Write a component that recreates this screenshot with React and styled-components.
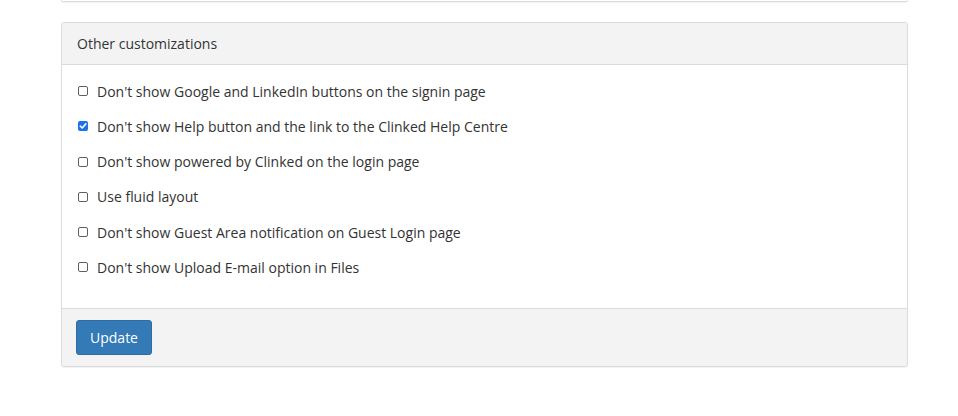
import React from "react";
import styled, { createGlobalStyle } from "styled-components";

const Global = createGlobalStyle`
  html, body { margin: 0; padding: 0; background: #fff; }
  body { font-family: "Open Sans", "Liberation Sans", sans-serif; color: #333; font-size: 14px; }
  * { box-sizing: border-box; }
`;

const Page = styled.div`
  width: 958px;
  height: 416px;
  padding: 0 50px 0 61px;
  display: flex;
  flex-direction: column;
  gap: 20px;
  overflow: hidden;
`;

const StubPanel = styled.div`
  width: 847px;
  height: 2px;
  border: 1px solid #dcdcdc;
  border-top: none;
  border-radius: 0 0 3px 3px;
  box-shadow: 0 1px 1px rgba(0, 0, 0, 0.05);
`;

const Panel = styled.div`
  width: 847px;
  border: 1px solid #dcdcdc;
  border-radius: 3px;
  background: #fff;
  box-shadow: 0 1px 1px rgba(0, 0, 0, 0.06);
  display: flex;
  flex-direction: column;
`;

const PanelHeading = styled.div`
  background: #f3f3f3;
  border-bottom: 1px solid #dcdcdc;
  border-radius: 3px 3px 0 0;
  height: 42px;
  padding: 0 15px;
  display: flex;
  align-items: center;
  font-size: 14px;
  color: #333;
`;

const PanelBody = styled.div`
  padding: 16px 15px 0 15px;
  height: 243px;
  display: flex;
  flex-direction: column;
  gap: 15.3px;
`;

const CheckRow = styled.label`
  display: flex;
  align-items: center;
  height: 20px;
  gap: 9px;
  font-size: 14px;
  color: #333;
  cursor: pointer;
`;

const Box = styled.span`
  width: 10px;
  height: 10px;
  margin-left: 1px;
  border-radius: 2px;
  flex: none;
  display: flex;
  align-items: center;
  justify-content: center;
  border: ${(p) => (p.$checked ? "none" : "1.6px solid #5f5f5f")};
  background: ${(p) => (p.$checked ? "#1a73e8" : "#fff")};
`;

const PanelFooter = styled.div`
  background: #f3f3f3;
  border-top: 1px solid #dcdcdc;
  border-radius: 0 0 3px 3px;
  padding: 11px 14px 11px 14px;
  display: flex;
`;

const Button = styled.button`
  font-family: "Open Sans", "Liberation Sans", sans-serif;
  font-size: 14px;
  color: #fff;
  background: #337ab7;
  border: 1px solid #2e6da4;
  border-radius: 3px;
  height: 35px;
  width: 76px;
  padding: 0;
  cursor: pointer;
`;

const options = [
  { label: "Don't show Google and LinkedIn buttons on the signin page", checked: false },
  { label: "Don't show Help button and the link to the Clinked Help Centre", checked: true },
  { label: "Don't show powered by Clinked on the login page", checked: false },
  { label: "Use fluid layout", checked: false },
  { label: "Don't show Guest Area notification on Guest Login page", checked: false },
  { label: "Don't show Upload E-mail option in Files", checked: false },
];

function Check({ checked }) {
  return (
    <Box $checked={checked}>
      {checked && (
        <svg width="8" height="8" viewBox="0 0 8 8">
          <path d="M1.3 4.2 L3.2 6 L6.8 1.9" fill="none" stroke="#fff" strokeWidth="1.6" strokeLinecap="round" strokeLinejoin="round" />
        </svg>
      )}
    </Box>
  );
}

export default function App() {
  return (
    <>
      <Global />
      <Page>
        <StubPanel />
        <Panel>
          <PanelHeading>Other customizations</PanelHeading>
          <PanelBody>
            {options.map((o) => (
              <CheckRow key={o.label}>
                <Check checked={o.checked} />
                <span>{o.label}</span>
              </CheckRow>
            ))}
          </PanelBody>
          <PanelFooter>
            <Button>Update</Button>
          </PanelFooter>
        </Panel>
      </Page>
    </>
  );
}
